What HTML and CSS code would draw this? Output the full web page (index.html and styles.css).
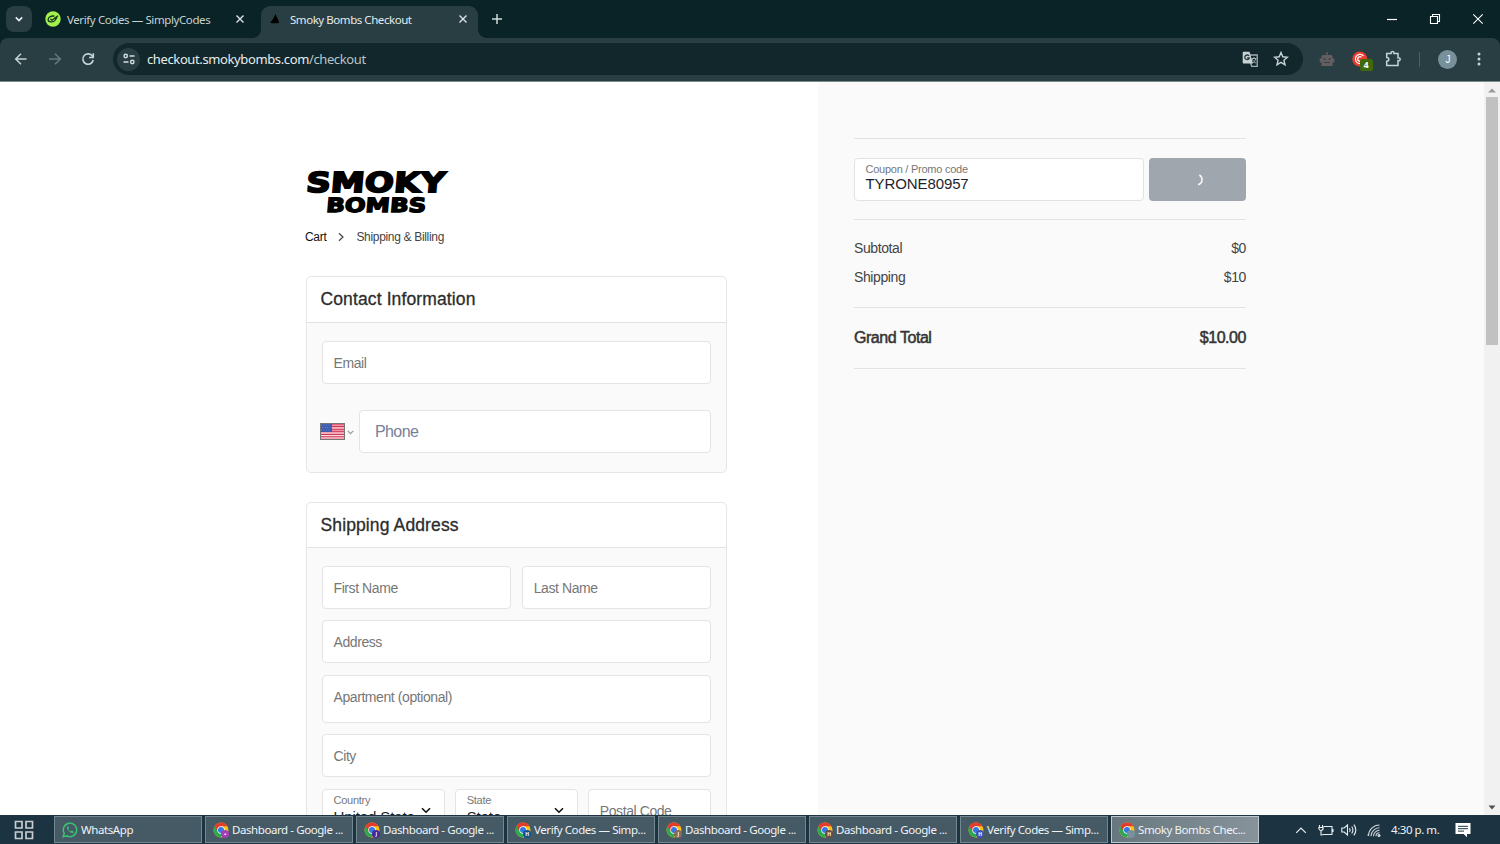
FILE: index.html
```html
<!DOCTYPE html>
<html lang="en">
<head>
    <meta charset="UTF-8">
    <meta name="viewport" content="width=device-width, initial-scale=1.0">
    <title>Smoky Bombs Checkout</title>
    <link rel="stylesheet" href="styles.css">
</head>
<body>
    <!-- Shared icons -->
    <svg class="sprite" width="0" height="0">
        <symbol id="chrome" viewBox="0 0 16 16">
            <circle cx="8" cy="8" r="7.5" fill="#fbc116"/>
            <path d="M8 8 1.5 4.2A7.5 7.5 0 0 0 7.6 15.5L11 9.7Z" fill="#2da94f"/>
            <path d="M1.5 4.2A7.5 7.5 0 0 1 14.5 4.3H8L4.8 9.8Z" fill="#e33b2e"/>
            <circle cx="8" cy="8" r="3.7" fill="#fff"/>
            <circle cx="8" cy="8" r="3" fill="#3478e5"/>
        </symbol>
        <symbol id="close" viewBox="0 0 10 10">
            <path d="M1.5 1.5 8.5 8.5M8.5 1.5 1.5 8.5" stroke="#dce5e6" stroke-width="1.4" fill="none"/>
        </symbol>
    </svg>

    <div class="screen">
        <!-- Tabs -->
        <header class="tab-strip">
            <div class="tab-search">
                <svg width="10" height="10" viewBox="0 0 10 10"><path d="M1.8 3.3 5 6.5 8.2 3.3" stroke="#e6eeee" stroke-width="1.7" fill="none"/></svg>
            </div>
            <div class="tab">
                <svg class="favicon" width="16" height="16" viewBox="0 0 16 16">
                    <circle cx="8" cy="8" r="7.7" fill="#a4f04c"/>
                    <path d="M9.5 5.2C6.2 4.4 3 6.3 3.1 8.8c.1 2.5 4.5 2.9 6.7.8 1.3-1.2 1.4-2.6.9-3.4M5.3 8l1.7 1.3L13 4.8M9 7.2h3.3" stroke="#12351c" stroke-width="1.3" fill="none"/>
                </svg>
                <span class="tab-title">Verify Codes — SimplyCodes</span>
                <svg class="tab-close" width="10" height="10"><use href="#close"/></svg>
            </div>
            <div class="tab tab-active">
                <svg class="favicon" width="16" height="16" viewBox="0 0 16 16"><path d="M7.600 3 11.200 11.500 10 12.300H3.500L2.300 11.500 5 8Z" fill="#000"/></svg>
                <span class="tab-title">Smoky Bombs Checkout</span>
                <svg class="tab-close" width="10" height="10"><use href="#close"/></svg>
            </div>
            <svg class="new-tab" width="12" height="12" viewBox="0 0 12 12"><path d="M6 1v10M1 6h10" stroke="#d0dadb" stroke-width="1.5"/></svg>
            <div class="window-buttons">
                <svg width="12" height="12" viewBox="0 0 12 12"><path d="M1 6.500h10" stroke="#fff" stroke-width="1.2"/></svg>
                <svg width="12" height="12" viewBox="0 0 12 12"><path d="M1.5 3.5h7v7h-7zM3.5 3.5v-2h7v7h-2" stroke="#fff" stroke-width="1.1" fill="none"/></svg>
                <svg width="12" height="12" viewBox="0 0 12 12"><path d="M1.3 1.3l9.4 9.4M10.7 1.3 1.3 10.7" stroke="#fff" stroke-width="1.1"/></svg>
            </div>
        </header>

        <!-- Address bar -->
        <div class="toolbar">
            <div class="nav-buttons">
                <svg width="14" height="14" viewBox="0 0 14 14"><path d="M12.5 7H2M7 1.7 1.7 7 7 12.3" stroke="#c3d3d5" stroke-width="1.5" fill="none"/></svg>
                <svg width="14" height="14" viewBox="0 0 14 14"><path d="M1 7h11M7 1.7 12.3 7 7 12.3" stroke="#66787b" stroke-width="1.5" fill="none"/></svg>
                <svg width="14" height="14" viewBox="0 0 14 14"><path d="M11.5 4.3A5.2 5.2 0 1 0 12.2 8M12.3 1.2v4.3H8" stroke="#c3d3d5" stroke-width="1.6" fill="none"/></svg>
            </div>
            <div class="omnibox">
                <div class="site-info">
                    <svg width="14" height="14" viewBox="0 0 14 14" fill="none" stroke="#d5e0e1" stroke-width="1.4"><circle cx="3.7" cy="4" r="1.7"/><path d="M7.5 4H12.5M1.5 10H6.5"/><circle cx="10.3" cy="10" r="1.7"/></svg>
                </div>
                <span class="url">checkout.smokybombs.com<span class="path">/checkout</span></span>
                <svg class="translate" width="17" height="17" viewBox="0 0 17 17">
                    <path d="M8 4h7.2v11.3H9.8L8 11" fill="none" stroke="#9eafb2" stroke-width="1.3"/>
                    <path d="M9.5 7.5h5M12 6v1.5M10.3 8c.6 1.8 2 3.2 3.7 4M13.7 8c-.6 2-1.7 3.2-3.2 4.2" stroke="#9eafb2" fill="none"/>
                    <path d="M1.5.8h6L11 12.5H1.5A1 1 0 0 1 .7 11.5V1.7a1 1 0 0 1 .8-.9Z" fill="#c9d3d4"/>
                    <path d="M7 5A2.3 2.3 0 1 0 7.3 7H5.2" fill="none" stroke="#263b40" stroke-width="1.3"/>
                </svg>
                <svg class="star" width="16" height="16" viewBox="0 0 16 16"><path d="M8 1.5l1.8 4.3 4.7.4-3.6 3 1.1 4.6L8 11.3 4 13.8l1.1-4.6-3.6-3 4.7-.4Z" fill="none" stroke="#c5d3d5" stroke-width="1.4"/></svg>
            </div>
            <div class="extensions">
                <svg width="16" height="16" viewBox="0 0 16 16"><path d="M7.3 1h1.4v3h3.3a1.5 1.5 0 0 1 1.5 1.5v2h1.8v4h-1.8V15h-11v-3.5H.7v-4h1.800v-2A1.5 1.5 0 0 1 4 4h3.3Z" fill="#655e60"/><circle cx="5.5" cy="8" r="1.1" fill="#334347"/><circle cx="10.5" cy="8" r="1.1" fill="#334347"/><path d="M5 11.5h6" stroke="#334347"/></svg>
                <div class="coupon-ext">
                    <svg width="16" height="16" viewBox="0 0 16 16"><circle cx="7.8" cy="8" r="7.5" fill="#ed3d32"/><path d="M11.5 5A4.6 4.6 0 1 0 8 12.6M9.5 6.2a2.3 2.3 0 1 0 0 3.5" stroke="#fff" stroke-width="1.2" fill="none"/></svg>
                    <span class="ext-badge">4</span>
                </div>
                <svg width="18" height="18" viewBox="0 0 18 18"><path d="M2.7 3.5h4.3c-.5-2.7 3.5-2.7 3 0h4v4.3c2.9-.4 2.9 3.3 0 2.900v4.800H2.700v-4.300c2.900 0 2.900-3.800 0-3.800Z" fill="none" stroke="#c5d5d6" stroke-width="1.5"/></svg>
                <span class="separator"></span>
                <span class="avatar">J</span>
                <svg width="4" height="16" viewBox="0 0 4 16" fill="#c5d5d6"><circle cx="2" cy="3" r="1.5"/><circle cx="2" cy="8" r="1.5"/><circle cx="2" cy="13" r="1.5"/></svg>
            </div>
        </div>

        <!-- Checkout page -->
        <main class="page">
            <section class="checkout">
                <svg class="logo" width="144" height="46" viewBox="0 0 144 46">
                    <g transform="skewX(-5)">
                        <text class="logo-text" x="2.5" y="23.8" font-size="27.5" textLength="139" lengthAdjust="spacingAndGlyphs">SMOKY</text>
                        <text class="logo-text small" x="24.5" y="44" font-size="19.5" textLength="100" lengthAdjust="spacingAndGlyphs">BOMBS</text>
                    </g>
                </svg>
                <nav class="breadcrumb">
                    <a class="crumb-link">Cart</a>
                    <svg width="8" height="10" viewBox="0 0 8 10"><path d="M2 1.2 6 5 2 8.8" stroke="#444" stroke-width="1.2" fill="none"/></svg>
                    <span>Shipping &amp; Billing</span>
                </nav>

                <div class="card contact">
                    <h2>Contact Information</h2>
                    <div class="card-body">
                        <div class="field">Email</div>
                        <div class="phone-row">
                            <svg width="25" height="17" viewBox="0 0 25 17">
                                <path fill="#fb8fa0" d="M0 0h25v17H0z"/>
                                <path stroke="#c73a5a" stroke-width="1.2" d="M0 1h25M0 3.7h25M0 6.2h25M0 8.8h25M0 11.3h25M0 13.8h25M0 16.2h25"/>
                                <path stroke="#ffe3e8" stroke-width="1" d="M12 5h13M0 10h25M0 12.6h25M0 15h25"/>
                                <path fill="#3d5bb0" d="M0 0h12v9H0z"/>
                                <path stroke="#6f88cc" stroke-dasharray="1 1.5" d="M1 2h10M2 4.5h9M1 7h10"/>
                                <path fill="none" stroke="#777" d="M.5.5h24v16H.5z"/>
                            </svg>
                            <svg class="flag-arrow" width="7" height="5" viewBox="0 0 7 5"><path d="M.7.8 3.5 3.6 6.3.8" stroke="#999" stroke-width="1.2" fill="none"/></svg>
                            <div class="field phone">Phone</div>
                        </div>
                    </div>
                </div>

                <div class="card shipping">
                    <h2>Shipping Address</h2>
                    <div class="card-body">
                        <div class="field-row">
                            <div class="field">First Name</div>
                            <div class="field">Last Name</div>
                        </div>
                        <div class="field">Address</div>
                        <div class="field apartment">Apartment (optional)</div>
                        <div class="field">City</div>
                        <div class="field-row region">
                            <div class="field select">
                                <span class="label">Country</span>
                                <span class="value">United State</span>
                                <svg class="arrow" width="10" height="7" viewBox="0 0 10 7"><path d="M1 1.2 5 5.2 9 1.2" stroke="#111" stroke-width="1.6" fill="none"/></svg>
                            </div>
                            <div class="field select">
                                <span class="label">State</span>
                                <span class="value">State</span>
                                <svg class="arrow" width="10" height="7" viewBox="0 0 10 7"><path d="M1 1.2 5 5.2 9 1.2" stroke="#111" stroke-width="1.6" fill="none"/></svg>
                            </div>
                            <div class="field">Postal Code</div>
                        </div>
                    </div>
                </div>
            </section>

            <aside class="summary">
                <div class="coupon">
                    <div class="coupon-field">
                        <span class="label">Coupon / Promo code</span>
                        <span class="value">TYRONE80957</span>
                    </div>
                    <div class="apply">
                        <svg width="14" height="14" viewBox="0 0 14 14"><path d="M8.3 2C12.2 4 12 10.5 7 11.7" stroke="#f5f6f7" stroke-width="1.6" fill="none"/></svg>
                    </div>
                </div>
                <div class="totals">
                    <div class="line"><span>Subtotal</span><span>$0</span></div>
                    <div class="line"><span>Shipping</span><span>$10</span></div>
                </div>
                <div class="grand-total"><span>Grand Total</span><span>$10.00</span></div>
            </aside>

            <div class="scrollbar">
                <svg width="8" height="5" viewBox="0 0 8 5"><path d="M0 4.5 4 .5 8 4.5Z" fill="#9a9a9a"/></svg>
                <div class="thumb"></div>
                <svg class="scroll-down" width="8" height="5" viewBox="0 0 8 5"><path d="M.5.5 4 4.5 7.5.5Z" fill="#505050"/></svg>
            </div>
        </main>

        <!-- Taskbar -->
        <footer class="taskbar">
            <svg class="task-view" width="20" height="20" viewBox="0 0 20 20"><path d="M1.5 1.5h6.5v6.5H1.5zM12 1.5h6.5v6.5H12zM1.5 12h6.5v6.5H1.5zM12 12h6.5v6.5H12z" fill="none" stroke="#c9cdd0" stroke-width="1.7"/></svg>
            <div class="task">
                <svg width="16" height="16" viewBox="0 0 16 16"><path d="M1.2 14.8 2.2 11.2A6.7 6.7 0 1 1 4.9 13.8Z" fill="none" stroke="#37c972" stroke-width="1.4"/><path d="M5.3 4.5c-1 1 0 3 1.5 4.6s3.7 2.6 4.7 1.4l.1-1-1.9-.9-.9.8C7.5 9 6.7 8.2 6.2 7l.8-.8-.8-1.8Z" fill="#37c972"/></svg>
                <span>WhatsApp</span>
            </div>
            <div class="task"><i class="app badge-purple"><svg width="16" height="16"><use href="#chrome"/></svg><b>•</b></i><span>Dashboard - Google ...</span></div>
            <div class="task"><i class="app badge-indigo"><svg width="16" height="16"><use href="#chrome"/></svg><b>J</b></i><span>Dashboard - Google ...</span></div>
            <div class="task"><i class="app badge-blue"><svg width="16" height="16"><use href="#chrome"/></svg><b>H</b></i><span>Verify Codes — Simp...</span></div>
            <div class="task"><i class="app badge-brown"><svg width="16" height="16"><use href="#chrome"/></svg><b>J</b></i><span>Dashboard - Google ...</span></div>
            <div class="task"><i class="app badge-dark"><svg width="16" height="16"><use href="#chrome"/></svg><b>H</b></i><span>Dashboard - Google ...</span></div>
            <div class="task"><i class="app badge-royal"><svg width="16" height="16"><use href="#chrome"/></svg><b>H</b></i><span>Verify Codes — Simp...</span></div>
            <div class="task task-active"><i class="app badge-grey"><svg width="16" height="16"><use href="#chrome"/></svg><b></b></i><span>Smoky Bombs Chec...</span></div>
            <div class="tray">
                <svg width="12" height="8" viewBox="0 0 12 8"><path d="M1.2 6.8 6 2 10.8 6.8" stroke="#e8edf0" stroke-width="1.2" fill="none"/></svg>
                <svg width="16" height="12" viewBox="0 0 16 12" fill="none" stroke="#e8edf0" stroke-width="1.1"><path d="M5.5 2.5H14v8H4.5M15 5v3M1.5 1v2.5M4.5 1v2.5M.8 3.5h4.4c0 4-4.4 4-4.4 0ZM3 6.5v4.5h1.5"/></svg>
                <svg width="16" height="14" viewBox="0 0 16 14" fill="none" stroke="#e8edf0" stroke-width="1.1"><path d="M.8 5v4h2.4L6.5 12V2L3.2 5ZM8.5 5.3q1.2 1.7 0 3.4M10.7 3.5q2.5 3.5 0 7M12.9 1.7q3.9 5.3 0 10.6"/></svg>
                <svg width="14" height="14" viewBox="0 0 14 14" fill="none" stroke="#c9d2d7" stroke-width="1.1"><path d="M1.5 13A11 11 0 0 1 12.5 2M4 13.3A8.6 8.6 0 0 1 12.5 4.8M6.5 13.3a6 6 0 0 1 6-6M9 13.3A3.5 3.5 0 0 1 12.5 9.8M1.5 13l-.8-1.5"/><circle cx="12" cy="12.5" r="1" fill="#fff"/></svg>
                <span class="clock">4:30 p. m.</span>
                <svg class="notice" width="16" height="16" viewBox="0 0 16 16"><path d="M.5 1h15v11H12v3.3L8.7 12H.5Z" fill="#fff"/><path d="M3 4.3h10M3 6.7h10M3 9.1h6" stroke="#1c3442" stroke-width="1"/></svg>
            </div>
        </footer>
    </div>
</body>
</html>
```
FILE: styles.css
```css
* {
    box-sizing: border-box;
}
body {
    margin: 0;
    font-family: "Liberation Sans", Arial, sans-serif;
    overflow: hidden;
}
svg {
    display: block;
    flex: none;
}
.sprite {
    position: absolute;
}
.screen {
    display: flex;
    flex-direction: column;
    width: 1500px;
    height: 844px;
    overflow: hidden;
    background: #0a2327;
}

/* Tab strip */
.tab-strip {
    display: flex;
    height: 38px;
    padding: 6px 16px 0 6px;
    font-family: "Noto Sans", sans-serif;
    font-size: 11.5px;
    letter-spacing: -0.4px;
    color: #c7d2d3;
}
.tab-search {
    display: flex;
    align-items: center;
    justify-content: center;
    width: 26px;
    height: 26px;
    border-radius: 8px;
    background: #283e43;
}
.tab {
    display: flex;
    align-items: center;
    width: 217px;
    height: 26px;
    padding: 0 10px 0 13px;
}
.tab:not(.tab-active) {
    width: 229px;
    padding-right: 16px;
}
.tab-active {
    position: relative;
    height: 32px;
    padding: 0 10px 6px 7px;
    border-radius: 9px 9px 0 0;
    background: #283e43;
    color: #e4ebec;
    letter-spacing: -0.45px;
}
/* Curved feet of the active tab */
.tab-active::before,
.tab-active::after {
    content: "";
    position: absolute;
    bottom: 0;
    width: 8px;
    height: 8px;
}
.tab-active::before {
    left: -8px;
    background: radial-gradient(circle at 0 0, transparent 7.5px, #283e43 8px);
}
.tab-active::after {
    right: -8px;
    background: radial-gradient(circle at 100% 0, transparent 7.5px, #283e43 8px);
}
.tab-title {
    flex: 1;
    margin-left: 6px;
    line-height: 15px;
    white-space: nowrap;
}
.new-tab {
    margin: 7px 0 0 13px;
}
.window-buttons {
    display: flex;
    gap: 31px;
    margin: 7px 0 0 auto;
}

/* Toolbar */
.toolbar {
    display: flex;
    align-items: center;
    height: 44px;
    padding: 0 19px 1px 14px;
    border-bottom: 1px solid #7d8a8c;
    border-radius: 8px 8px 0 0;
    background: #283e43;
}
.nav-buttons {
    display: flex;
    gap: 19.5px;
    width: 99px;
}
.omnibox {
    display: flex;
    align-items: center;
    width: 1190px;
    height: 32px;
    padding: 0 14px 0 4px;
    border-radius: 16px;
    background: #11272b;
}
.site-info {
    display: flex;
    align-items: center;
    justify-content: center;
    width: 23px;
    height: 23px;
    border-radius: 50%;
    background: #283e43;
}
.url {
    margin-left: 7px;
    font-family: "Noto Sans", sans-serif;
    font-size: 13px;
    letter-spacing: -0.38px;
    color: #e6eded;
}
.path {
    color: #b9c5c7;
}
.translate {
    margin: 0 14px 0 auto;
}
.extensions {
    display: flex;
    flex: 1;
    align-items: center;
    justify-content: space-between;
    margin-left: 16px;
}
.coupon-ext {
    position: relative;
}
.ext-badge {
    position: absolute;
    left: 8px;
    top: 8px;
    width: 13px;
    height: 12px;
    border-radius: 2px;
    background: #3f6a0b;
    color: #fff;
    font: bold 9px/12px "Noto Sans", sans-serif;
    text-align: center;
}
.separator {
    width: 1px;
    height: 15px;
    margin-right: 2px;
    background: #4b6064;
}
.avatar {
    width: 19px;
    height: 19px;
    margin-right: 3px;
    border-radius: 50%;
    background: #78909c;
    color: #fff;
    font-size: 10px;
    line-height: 19px;
    text-align: center;
}

/* Page */
.page {
    display: flex;
    height: 733px;
    overflow: hidden;
    background: #fff;
}
.checkout {
    width: 818px;
    padding: 86px 91px 0 305px;
}
.logo {
    overflow: visible;
}
.logo-text {
    font-family: "DejaVu Sans", sans-serif;
    font-weight: bold;
    stroke: #000;
    stroke-width: 1.8px;
    stroke-linejoin: miter;
}
.small {
    stroke-width: 1.4px;
}
.breadcrumb {
    display: flex;
    align-items: center;
    gap: 11px;
    height: 16px;
    margin-top: 15px;
    font-size: 12px;
    letter-spacing: -0.32px;
    color: #444;
}
.crumb-link {
    color: #111;
}
.card {
    width: 421px;
    margin-left: 1px;
    border: 1px solid #e6e6e6;
    border-radius: 5px;
    background: #fafafa;
}
.contact {
    height: 197px;
    margin-top: 31px;
}
.shipping {
    height: 400px;
    margin-top: 29px;
}
.card h2 {
    height: 46px;
    margin: 0;
    padding-left: 13.5px;
    border-bottom: 1px solid #e2e2e2;
    border-radius: 5px 5px 0 0;
    background: #fff;
    color: #2c2c2c;
    font-size: 17.5px;
    font-weight: normal;
    line-height: 45px;
    letter-spacing: 0.12px;
    -webkit-text-stroke: 0.3px #2c2c2c;
}
.card-body {
    display: flex;
    flex-direction: column;
    gap: 11px;
    padding: 18px 15px 0 14.500px;
}
.field {
    flex: none;
    height: 43px;
    padding-left: 11px;
    border: 1px solid #e4e4e4;
    border-radius: 4px;
    background: #fff;
    color: #777;
    font-size: 14px;
    line-height: 42px;
    letter-spacing: -0.42px;
}
.phone-row {
    display: flex;
    align-items: center;
    margin: 15px 0 0 -1.5px;
}
.flag-arrow {
    margin: 2px 5px 0 2px;
}
.phone {
    flex: 1;
    padding-left: 15px;
    color: #78809a;
    font-size: 16px;
    line-height: 41px;
    letter-spacing: -0.6px;
}
.apartment {
    height: 48px;
}
.shipping h2 {
    height: 45px;
}
.shipping .card-body {
    gap: 11.4px;
}
.field-row {
    display: grid;
    grid-template-columns: 1fr 1fr;
    gap: 11px;
}
.region {
    grid-template-columns: 1fr 1fr 1fr;
    gap: 10px;
}
.select {
    position: relative;
    display: flex;
    flex-direction: column;
}
.label {
    color: #777;
    font-size: 11px;
    line-height: 13px;
    letter-spacing: -0.25px;
}
.select .label {
    margin-top: 4px;
}
.value {
    color: #1d1f2b;
    font-size: 15px;
    line-height: 16px;
    letter-spacing: -0.1px;
    white-space: nowrap;
}
.select .value {
    margin-top: 2px;
}
.arrow {
    position: absolute;
    right: 13px;
    top: 17px;
}

/* Order summary */
.summary {
    width: 666px;
    padding: 56px 238px 0 36px;
    background: #fafafa;
    color: #444;
    font-size: 14px;
    letter-spacing: -0.4px;
}
.coupon {
    display: flex;
    gap: 5px;
    height: 82px;
    padding-top: 19px;
    border-top: 1px solid #e3e3e3;
    border-bottom: 1px solid #e3e3e3;
}
.coupon-field {
    display: flex;
    flex-direction: column;
    width: 290px;
    height: 43px;
    padding: 4px 0 0 10.5px;
    border: 1px solid #e2e2e2;
    border-radius: 4px;
    background: #fff;
}
.coupon-field .value {
    line-height: 15px;
}
.apply {
    display: flex;
    flex: 1;
    align-items: center;
    justify-content: center;
    height: 43px;
    border-radius: 4px;
    background: #a0a6ad;
}
.totals {
    height: 88px;
    padding-top: 14px;
    border-bottom: 1px solid #e3e3e3;
}
.line,
.grand-total {
    display: flex;
    justify-content: space-between;
    line-height: 29px;
}
.grand-total {
    height: 61px;
    border-bottom: 1px solid #e3e3e3;
    color: #333;
    font-size: 16px;
    line-height: 60px;
    letter-spacing: -0.45px;
    -webkit-text-stroke: 0.5px #333;
}
.scrollbar {
    display: flex;
    flex-direction: column;
    align-items: center;
    width: 16px;
    padding: 6px 0 5px;
    background: #f1f1f1;
}
.thumb {
    width: 12px;
    height: 248px;
    margin-top: 4px;
    background: #c1c1c1;
}
.scroll-down {
    margin-top: auto;
}

/* Taskbar */
.taskbar {
    display: flex;
    gap: 3px;
    height: 29px;
    padding: 1px 29px 1px 14px;
    background: #1c3442;
    color: #f0f3f5;
    font-family: "Noto Sans", sans-serif;
    font-size: 11.5px;
    letter-spacing: -0.42px;
}
.task-view {
    margin: 4px 17px 0 0;
}
.task {
    display: flex;
    flex: none;
    align-items: center;
    gap: 3px;
    width: 148px;
    height: 27px;
    padding-left: 7px;
    border: 1px solid #738791;
    background: #465a66;
    white-space: nowrap;
}
.task-active {
    border-color: #c0c8cc;
    background: linear-gradient(90deg, #68777f, #87939a);
}
.app {
    position: relative;
    font-style: normal;
}
.app b {
    position: absolute;
    left: 8px;
    top: 8px;
    width: 8px;
    height: 8px;
    border-radius: 50%;
    color: #fff;
    font-size: 5px;
    line-height: 8px;
    text-align: center;
}
.badge-purple b { background: #a63fb5; }
.badge-indigo b { background: #4726a0; }
.badge-blue b { background: #0a5596; }
.badge-brown b { background: #8b6a60; }
.badge-dark b { background: #6b4a43; }
.badge-royal b { background: #3f51b5; }
.badge-grey b { background: #78909c; }
.tray {
    display: flex;
    flex: 1;
    align-items: center;
    gap: 9px;
    margin-left: 33px;
}
.tray svg:first-child {
    margin-right: 2px;
}
.clock {
    margin-left: 1px;
    white-space: nowrap;
    letter-spacing: -0.45px;
}
.tray svg:nth-child(3) {
    margin: 0 1px 0 -2px;
}
.notice {
    margin-left: auto;
}
```
